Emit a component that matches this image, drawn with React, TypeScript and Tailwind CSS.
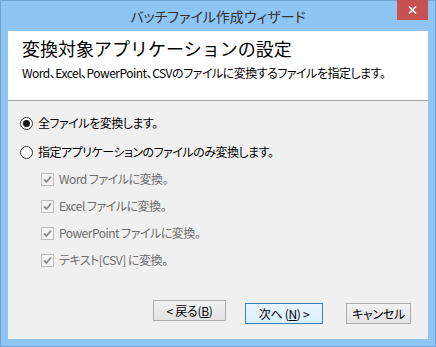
import React from "react";

const FONT = "font-['Noto_Sans_CJK_JP','Noto_Sans',sans-serif]";

function Radio({ checked, label }: { checked?: boolean; label: string }) {
  return (
    <div className="flex items-center h-[16px]">
      <span className="flex h-[13px] w-[13px] items-center justify-center rounded-full border border-[#333] bg-white">
        {checked && <span className="h-[7px] w-[7px] rounded-full bg-[#1a1a1a]" />}
      </span>
      <span className="ml-[5px] text-[12px] leading-[16px] tracking-[-0.5px] text-black [font-feature-settings:'palt']">
        {label}
      </span>
    </div>
  );
}

function Check({ label }: { label: string }) {
  return (
    <div className="flex items-center h-[16px]">
      <span className="flex h-[13px] w-[13px] items-center justify-center border border-[#bcbcbc] bg-[#f4f4f4]">
        <svg width="9" height="9" viewBox="0 0 9 9">
          <path d="M1 4.5 L3.5 7 L8 1.5" fill="none" stroke="#8a8a8a" strokeWidth="1.8" />
        </svg>
      </span>
      <span className="ml-[5px] text-[12px] leading-[16px] tracking-[-0.5px] text-[#6d6d6d] [font-feature-settings:'palt']">
        {label}
      </span>
    </div>
  );
}

function Button({ label, primary, width }: { label: React.ReactNode; primary?: boolean; width: string }) {
  return (
    <button
      className={`${width} h-[21px] text-center text-[12px] leading-[19px] tracking-[-0.3px] text-black [font-feature-settings:'palt'] border ${
        primary
          ? "border-[#3c7fb1] bg-gradient-to-b from-[#eaf6fd] to-[#d9f0fc]"
          : "border-[#acacac] bg-gradient-to-b from-[#f2f2f2] to-[#e3e3e3]"
      }`}
    >
      {label}
    </button>
  );
}

export default function App() {
  return (
    <div className={`${FONT} flex h-[347px] w-[436px] flex-col border border-[#6fa4d6] bg-[#8ec5f3]`}>
      {/* Title bar */}
      <div className="relative flex h-[30px] items-center justify-center">
        <span className="text-[14px] text-[#333] [font-feature-settings:'palt']">
          バッチファイル作成ウィザード
        </span>
        <div className="absolute right-[7px] top-[-1px] flex h-[20px] w-[31px] items-center justify-center bg-[#c75050]">
          <svg width="9" height="8" viewBox="0 0 9 8">
            <path d="M1 0.5 L8 7.5 M8 0.5 L1 7.5" stroke="#fff" strokeWidth="1.6" />
          </svg>
        </div>
      </div>

      {/* Client */}
      <div className="mx-[7px] mb-[7px] flex flex-1 flex-col bg-[#f0f0f0]">
        <div className="h-[70px] border-b border-[#a0a0a0] bg-white pl-[14px] pt-[5px]">
          <div className="text-[18px] leading-[24px] text-black">変換対象アプリケーションの設定</div>
          <div className="mt-[6px] text-[12px] leading-[14px] tracking-[-0.5px] text-black [font-feature-settings:'palt']">
            Word、Excel、PowerPoint、CSVのファイルに変換するファイルを指定します。
          </div>
        </div>

        <div className="flex flex-1 flex-col pl-[12px] pt-[14px]">
          <Radio checked label="全ファイルを変換します。" />
          <div className="mt-[13px]">
            <Radio label="指定アプリケーションのファイルのみ変換します。" />
          </div>
          <div className="ml-[21px] mt-[11px] flex flex-col gap-[11px]">
            <Check label="Word ファイルに変換。" />
            <Check label="Excel ファイルに変換。" />
            <Check label="PowerPoint ファイルに変換。" />
            <Check label="テキスト[CSV] に変換。" />
          </div>

          <div className="mt-auto mb-[15px] flex pl-[133px]">
            <Button width="w-[73px]" label={<>&lt; 戻る(<u>B</u>)</>} />
            <div className="ml-[19px]">
              <Button width="w-[78px]" primary label={<>次へ (<u>N</u>) &gt;</>} />
            </div>
            <div className="ml-[23px]">
              <Button width="w-[65px]" label="キャンセル" />
            </div>
          </div>
        </div>
      </div>
    </div>
  );
}
